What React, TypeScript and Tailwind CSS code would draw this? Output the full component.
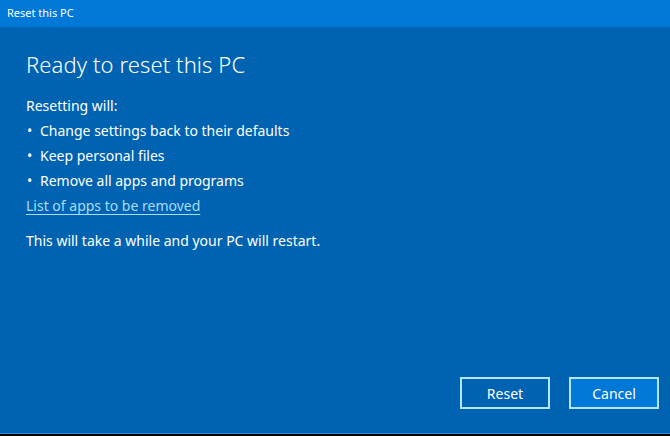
export default function App() {
  return (
    <div
      className="w-[670px] h-[436px] flex flex-col bg-black overflow-hidden"
      style={{ fontFamily: '"Noto Sans", "Open Sans", sans-serif' }}
    >
      <div className="h-[27px] bg-[#0078d7] flex items-center pl-[7px] text-[11px] text-white shrink-0">
        Reset this PC
      </div>
      <div className="flex-1 bg-[#0063b1] flex flex-col text-white">
        <div className="pl-[26px] pt-[20px]">
          <h1 className="text-[22px] leading-[34px] font-light tracking-[0.1px]">Ready to reset this PC</h1>
          <div className="mt-[12px] text-[14px] leading-[25px]">
            <div>Resetting will:</div>
            <ul>
              <li className="flex"><span className="w-[14px] pl-[1px]">•</span>Change settings back to their defaults</li>
              <li className="flex"><span className="w-[14px] pl-[1px]">•</span>Keep personal files</li>
              <li className="flex"><span className="w-[14px] pl-[1px]">•</span>Remove all apps and programs</li>
            </ul>
            <div className="text-[#a9dcf7] underline underline-offset-[3px]">List of apps to be removed</div>
            <div className="mt-[10px]">This will take a while and your PC will restart.</div>
          </div>
        </div>
        <div className="flex-1" />
        <div className="flex justify-end gap-[19px] pr-[11px] pb-[24px]">
          <button className="w-[90px] h-[32px] border-2 border-[#b5e6f7] bg-[#0063b1] text-white text-[14px]">
            Reset
          </button>
          <button className="w-[90px] h-[32px] border-2 border-[#b5e6f7] bg-[#0078d7] text-white text-[14px]">
            Cancel
          </button>
        </div>
      </div>
      <div className="h-[1px] bg-[#2a8ad8] shrink-0" />
      <div className="h-[2px] bg-black shrink-0" />
    </div>
  );
}
